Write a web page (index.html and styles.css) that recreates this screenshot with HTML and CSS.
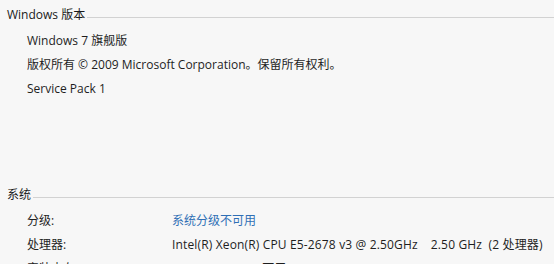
FILE: index.html
```html
<!DOCTYPE html>
<html lang="zh-CN">
<head>
<meta charset="utf-8">
<title>系统</title>
<link rel="stylesheet" href="styles.css">
</head>
<body>
<div class="page">
  <section class="section">
    <div class="section-head"><span class="section-title">Windows 版本</span><span class="rule"></span></div>
    <div class="rows">
      <div class="row"><span class="text">Windows 7 旗舰版</span></div>
      <div class="row"><span class="text">版权所有 © 2009 Microsoft Corporation。保留所有权利。</span></div>
      <div class="row"><span class="text">Service Pack 1</span></div>
    </div>
  </section>
  <section class="section section-system">
    <div class="section-head"><span class="section-title">系统</span><span class="rule"></span></div>
    <div class="rows">
      <div class="row kv"><span class="label">分级:</span><a class="value link" href="#">系统分级不可用</a></div>
      <div class="row kv"><span class="label">处理器:</span><span class="value cpu">Intel(R) Xeon(R) CPU E5-2678 v3 @ 2.50GHz&nbsp;&nbsp;&nbsp;&nbsp;2.50 GHz&nbsp;&nbsp;(2 处理器)</span></div>
      <div class="row kv"><span class="label">安装内存(RAM):</span><span class="value">128 GB (128 GB 可用)</span></div>
    </div>
  </section>
</div>
</body>
</html>
```
FILE: styles.css
```css
html, body {
  margin: 0;
  padding: 0;
  background: #f7f7f7;
}
body {
  font-family: "Open Sans", "Noto Sans CJK SC", sans-serif;
  font-size: 12px;
  color: #1e1e1e;
  overflow: hidden;
}
.page {
  padding-top: 3px;
}
.section-system {
  margin-top: 82px;
}
.section-head {
  display: flex;
  align-items: center;
  height: 24px;
  padding-left: 7px;
}
.section-title {
  line-height: 24px;
  color: #1a1a1a;
  white-space: nowrap;
}
.rule {
  flex: 1;
  height: 1px;
  margin-left: 2px;
  margin-top: 5px;
  background: #d2d2d2;
}
.rows {
  margin-top: 2px;
  padding-left: 27px;
}
.row {
  height: 24px;
  line-height: 24px;
  white-space: nowrap;
}
.kv {
  display: grid;
  grid-template-columns: 145px auto;
}
.cpu {
  letter-spacing: 0.15px;
}
.link {
  color: #2f6fb5;
  text-decoration: none;
}
```
